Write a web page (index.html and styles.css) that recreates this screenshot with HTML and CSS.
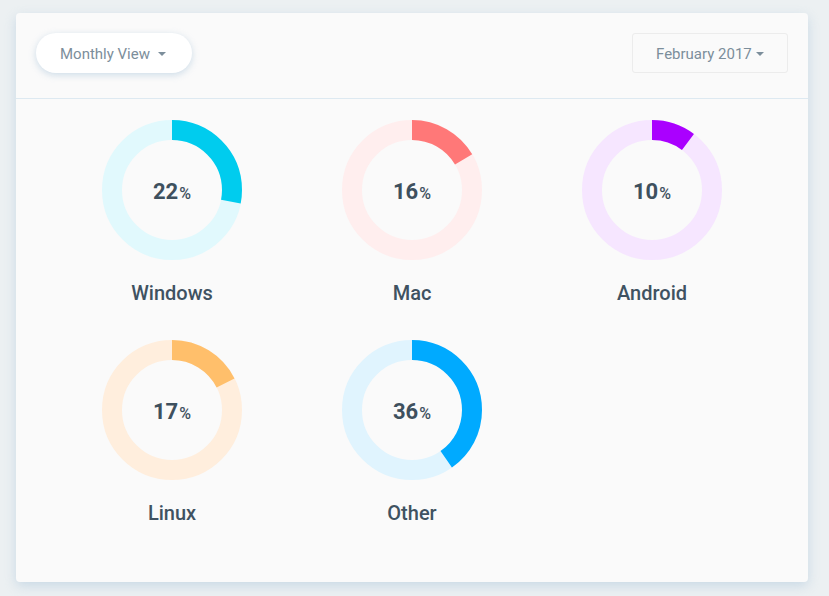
FILE: index.html
```html
<!DOCTYPE html>
<html>
<head>
<meta charset="utf-8">
<link rel="stylesheet" href="styles.css">
</head>
<body>
<div class="card">
  <div class="card-header">
    <button class="pill-btn">Monthly View <span class="caret"></span></button>
    <button class="box-btn">February 2017 <span class="caret"></span></button>
  </div>
  <div class="card-body">
    <div class="grid">
      <div class="cell">
        <div class="donut">
          <svg width="140" height="140" viewBox="0 0 140 140">
            <circle class="track" cx="70" cy="70" r="60" stroke="#e1f9fd"/>
            <circle class="seg" cx="70" cy="70" r="60" stroke="#00ccee" style="stroke-dasharray: 105.8 400"/>
          </svg>
          <div class="value">22<span class="pct">%</span></div>
        </div>
        <div class="label">Windows</div>
      </div>
      <div class="cell">
        <div class="donut">
          <svg width="140" height="140" viewBox="0 0 140 140">
            <circle class="track" cx="70" cy="70" r="60" stroke="#ffeeee"/>
            <circle class="seg" cx="70" cy="70" r="60" stroke="#ff7878" style="stroke-dasharray: 62 400"/>
          </svg>
          <div class="value">16<span class="pct">%</span></div>
        </div>
        <div class="label">Mac</div>
      </div>
      <div class="cell">
        <div class="donut">
          <svg width="140" height="140" viewBox="0 0 140 140">
            <circle class="track" cx="70" cy="70" r="60" stroke="#f6e6ff"/>
            <circle class="seg" cx="70" cy="70" r="60" stroke="#aa00ff" style="stroke-dasharray: 38.5 400"/>
          </svg>
          <div class="value">10<span class="pct">%</span></div>
        </div>
        <div class="label">Android</div>
      </div>
      <div class="cell">
        <div class="donut">
          <svg width="140" height="140" viewBox="0 0 140 140">
            <circle class="track" cx="70" cy="70" r="60" stroke="#ffeedd"/>
            <circle class="seg" cx="70" cy="70" r="60" stroke="#ffbf6b" style="stroke-dasharray: 66 400"/>
          </svg>
          <div class="value">17<span class="pct">%</span></div>
        </div>
        <div class="label">Linux</div>
      </div>
      <div class="cell">
        <div class="donut">
          <svg width="140" height="140" viewBox="0 0 140 140">
            <circle class="track" cx="70" cy="70" r="60" stroke="#e0f4fe"/>
            <circle class="seg" cx="70" cy="70" r="60" stroke="#00aaff" style="stroke-dasharray: 151.8 400"/>
          </svg>
          <div class="value">36<span class="pct">%</span></div>
        </div>
        <div class="label">Other</div>
      </div>
    </div>
  </div>
</div>
</body>
</html>
```

FILE: styles.css
```css
* { box-sizing: border-box; }
html, body { margin: 0; padding: 0; }
body {
  background: #ecf0f2;
  font-family: Roboto, "Liberation Sans", sans-serif;
  padding: 13px 21px 0 16px;
  height: 596px;
  overflow: hidden;
}
.card {
  width: 792px;
  height: 569px;
  background: #fafafa;
  border-radius: 4px;
  box-shadow: 0 4px 12px rgba(160, 190, 215, 0.45);
}
.card-header {
  display: flex;
  justify-content: space-between;
  align-items: flex-start;
  padding: 20px 20px 25px;
  border-bottom: 1px solid #dde9f1;
}
.pill-btn {
  width: 156px;
  height: 40px;
  border: none;
  border-radius: 20px;
  background: #fff;
  box-shadow: 0 2px 7px rgba(150, 185, 210, 0.45);
  font-family: inherit;
  font-size: 15px;
  color: #7c8e9b;
  display: flex;
  align-items: center;
  padding: 1px 0 0 24px;
  gap: 8px;
}
.box-btn {
  width: 156px;
  height: 40px;
  border: 1px solid #ececec;
  border-radius: 3px;
  background: #fafafa;
  font-family: inherit;
  font-size: 15px;
  color: #7c8e9b;
  display: flex;
  align-items: center;
  padding: 1px 0 0 23px;
  gap: 4px;
}
.caret {
  width: 0;
  height: 0;
  border-left: 4px solid transparent;
  border-right: 4px solid transparent;
  border-top: 4px solid #7c8e9b;
}
.card-body {
  padding: 21px 36px 0;
}
.grid {
  display: grid;
  grid-template-columns: repeat(3, 240px);
  row-gap: 35px;
}
.cell {
  display: flex;
  flex-direction: column;
  align-items: center;
}
.donut {
  position: relative;
  width: 140px;
  height: 140px;
}
.donut svg {
  display: block;
}
.track, .seg {
  fill: none;
  stroke-width: 20;
}
.seg {
  transform: rotate(-90deg);
  transform-origin: 70px 70px;
}
.value {
  position: absolute;
  inset: 0;
  display: flex;
  align-items: center;
  justify-content: center;
  font-size: 22px;
  font-weight: 700;
  color: #3e505e;
  padding-top: 3px;
}
.pct {
  font-size: 16px;
  font-weight: 500;
  margin-left: 1px;
  padding-top: 3px;
}
.label {
  margin-top: 21px;
  font-size: 20px;
  line-height: 24px;
  font-weight: 500;
  color: #3f5261;
}
```
